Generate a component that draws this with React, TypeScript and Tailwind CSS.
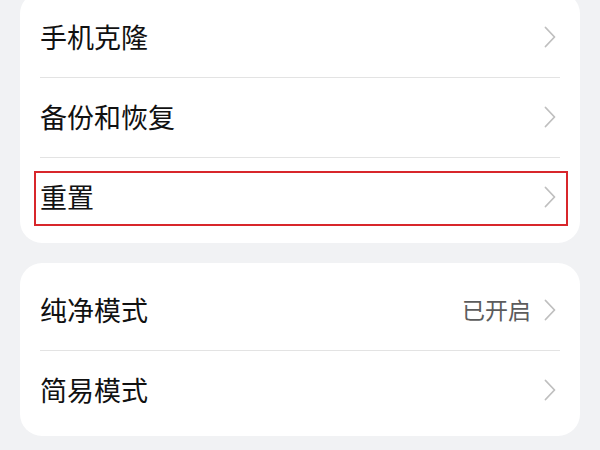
import React from "react";

const font = { fontFamily: '"Noto Sans CJK SC", "Noto Sans", sans-serif' };

function Chevron() {
  return (
    <svg width="14" height="22" viewBox="0 0 14 22" className="shrink-0">
      <path d="M2.5 1.5 L11.5 11 L2.5 20.5" fill="none" stroke="#bfbfbf" strokeWidth="1.8" strokeLinecap="round" strokeLinejoin="round" />
    </svg>
  );
}

function Row({ label, value, divider, highlight }: { label: string; value?: string; divider?: boolean; highlight?: boolean }) {
  return (
    <div className="relative h-[80px] px-[20px]">
      <div className={`flex h-full items-center ${divider ? "border-b border-[#e3e3e3]" : ""}`}>
        <span className="-mt-[3px] flex-1 text-[27px] font-normal leading-none text-[#111111]">{label}</span>
        {value && <span className="-mt-[2px] mr-[12px] text-[23px] leading-none text-[#5c5c5c]">{value}</span>}
        <div className="-mt-[2px] mr-[3px]"><Chevron /></div>
      </div>
      {highlight && (
        <div className="absolute left-[14px] right-[12px] top-[13px] bottom-[12px] border-2 border-[#d8262b]" />
      )}
    </div>
  );
}

export default function App() {
  return (
    <div className="h-[450px] w-[600px] overflow-hidden bg-[#f1f2f4] px-[20px]" style={font}>
      <div className="-mt-[8px] rounded-[22px] bg-white pt-[6px] pb-[5px]">
        <Row label="手机克隆" divider />
        <Row label="备份和恢复" divider />
        <Row label="重置" highlight />
      </div>
      <div className="mt-[20px] rounded-[22px] bg-white pt-[8px] pb-[5px]">
        <Row label="纯净模式" value="已开启" divider />
        <Row label="简易模式" />
      </div>
    </div>
  );
}
